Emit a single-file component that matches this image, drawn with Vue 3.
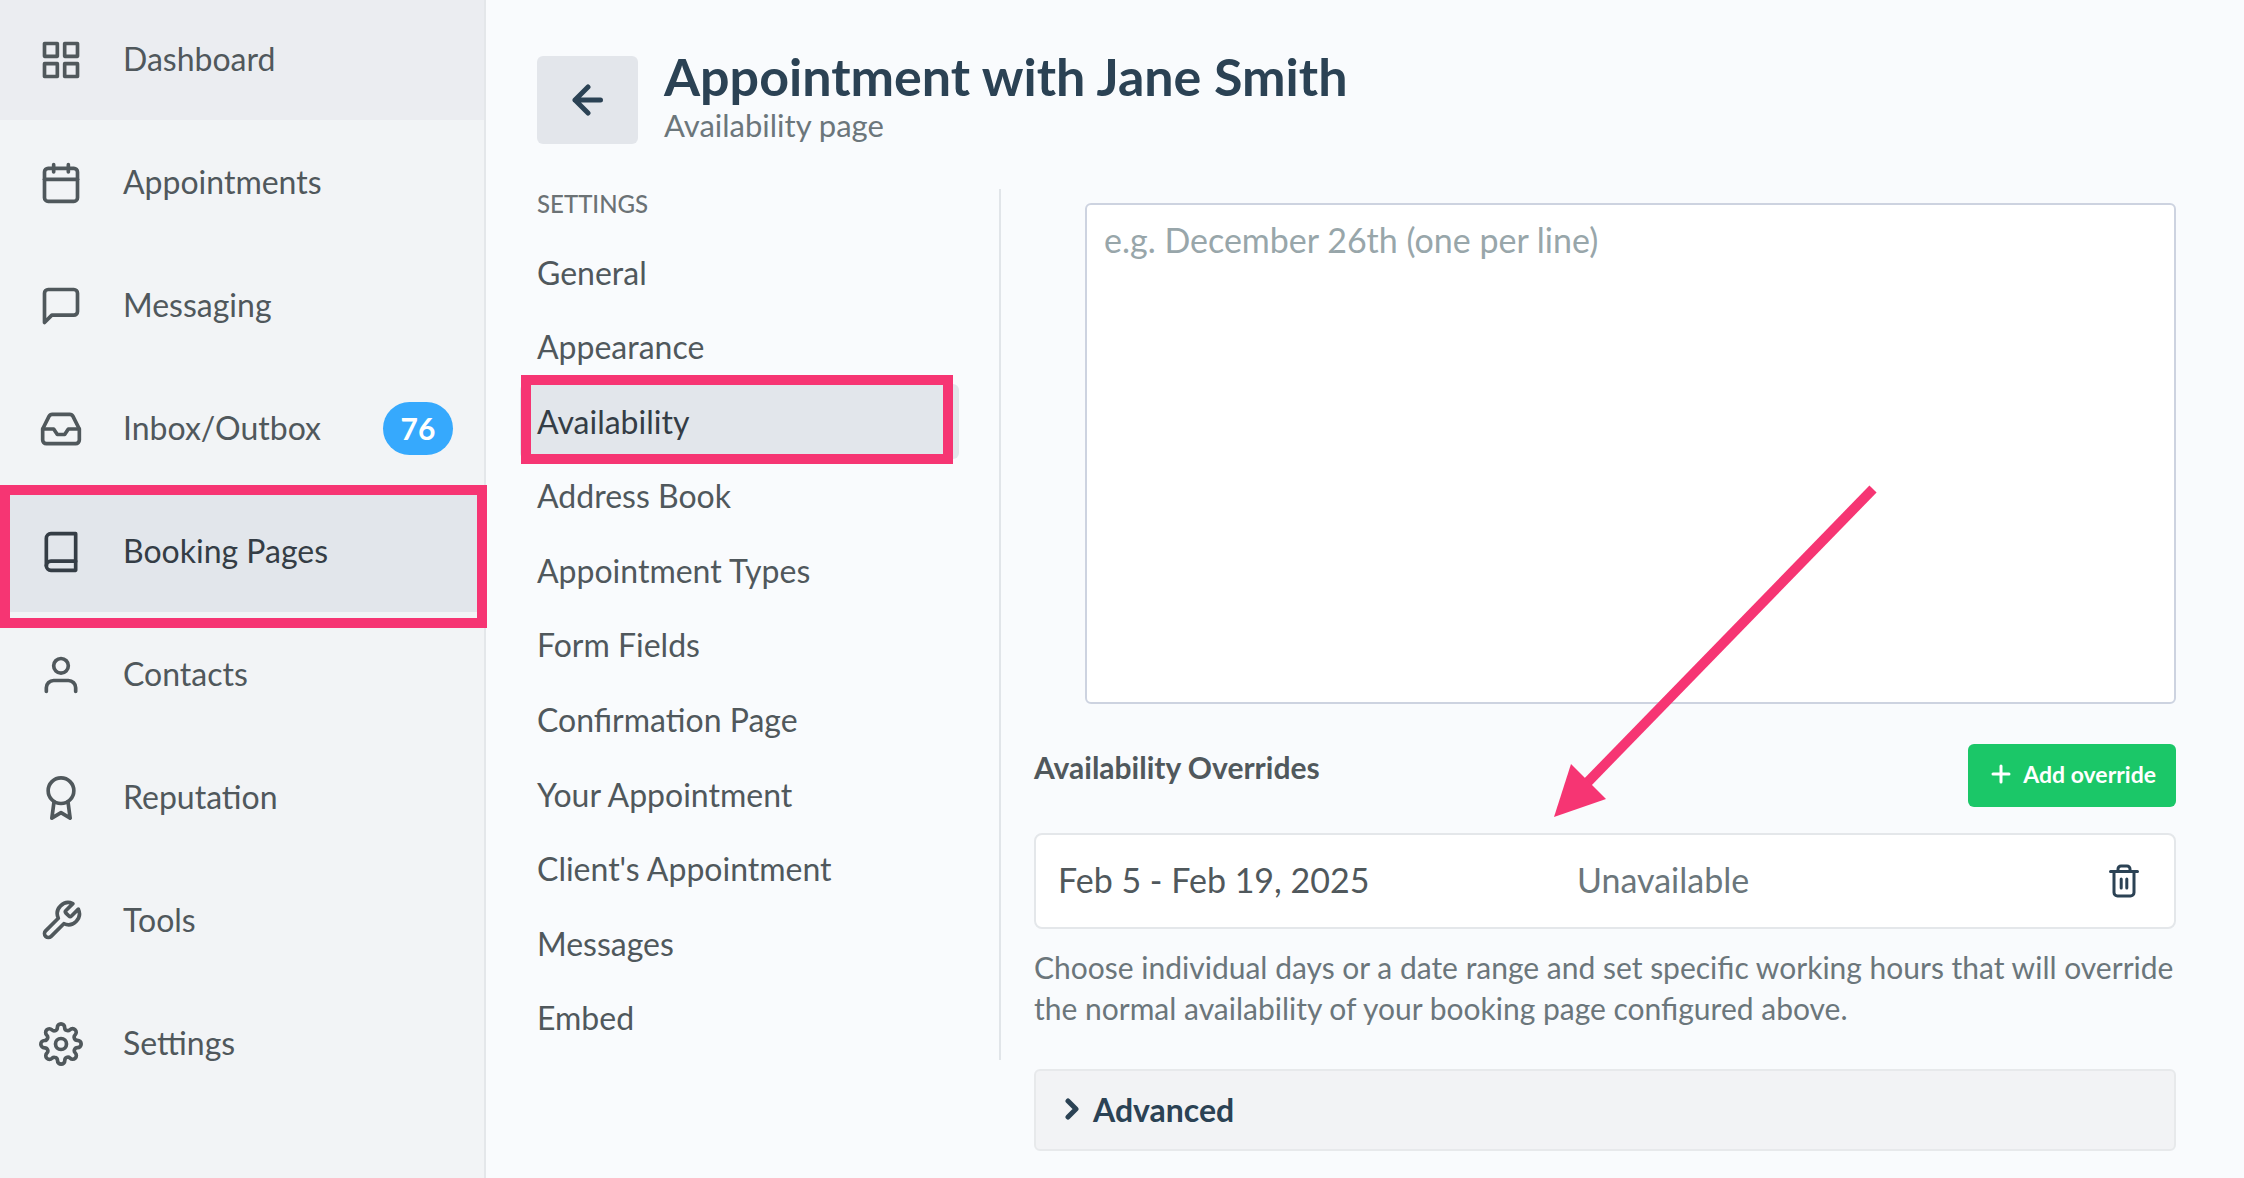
<script setup>
import { ref } from 'vue'

const navItems = [
  { label: 'Dashboard', state: 'hover', paths: ['M3 3h7v7H3z', 'M14 3h7v7h-7z', 'M14 14h7v7h-7z', 'M3 14h7v7H3z'] },
  { label: 'Appointments', paths: ['M5 4h14a2 2 0 0 1 2 2v14a2 2 0 0 1-2 2H5a2 2 0 0 1-2-2V6a2 2 0 0 1 2-2z', 'M16 2v4', 'M8 2v4', 'M3 10h18'] },
  { label: 'Messaging', paths: ['M21 15a2 2 0 0 1-2 2H7l-4 4V5a2 2 0 0 1 2-2h14a2 2 0 0 1 2 2z'] },
  { label: 'Inbox/Outbox', badge: 76, paths: ['M22 12h-6l-2 3h-4l-2-3H2', 'M5.45 5.11 2 12v6a2 2 0 0 0 2 2h16a2 2 0 0 0 2-2v-6l-3.45-6.89A2 2 0 0 0 16.76 4H7.24a2 2 0 0 0-1.79 1.11z'] },
  { label: 'Booking Pages', state: 'active', paths: ['M4 19.5A2.5 2.5 0 0 1 6.5 17H20', 'M6.5 2H20v20H6.5A2.5 2.5 0 0 1 4 19.5v-15A2.5 2.5 0 0 1 6.5 2z'] },
  { label: 'Contacts', paths: ['M20 21v-2a4 4 0 0 0-4-4H8a4 4 0 0 0-4 4v2', 'M12 3a4 4 0 1 1 0 8 4 4 0 0 1 0-8z'] },
  { label: 'Reputation', paths: ['M12 1a7 7 0 1 1 0 14 7 7 0 0 1 0-14z', 'M8.21 13.89 7 23l5-3 5 3-1.21-9.12'] },
  { label: 'Tools', paths: ['M14.7 6.3a1 1 0 0 0 0 1.4l1.6 1.6a1 1 0 0 0 1.4 0l3.77-3.77a6 6 0 0 1-7.94 7.94l-6.91 6.91a2.12 2.12 0 0 1-3-3l6.91-6.91a6 6 0 0 1 7.94-7.94l-3.76 3.76z'] },
  { label: 'Settings', paths: ['M12 9a3 3 0 1 1 0 6 3 3 0 0 1 0-6z', 'M19.4 15a1.65 1.65 0 0 0 .33 1.82l.06.06a2 2 0 0 1 0 2.83 2 2 0 0 1-2.83 0l-.06-.06a1.65 1.65 0 0 0-1.82-.33 1.65 1.65 0 0 0-1 1.51V21a2 2 0 0 1-2 2 2 2 0 0 1-2-2v-.09A1.65 1.65 0 0 0 9 19.4a1.65 1.65 0 0 0-1.82.33l-.06.06a2 2 0 0 1-2.83 0 2 2 0 0 1 0-2.83l.06-.06a1.65 1.65 0 0 0 .33-1.82 1.65 1.65 0 0 0-1.51-1H3a2 2 0 0 1-2-2 2 2 0 0 1 2-2h.09A1.65 1.65 0 0 0 4.6 9a1.65 1.65 0 0 0-.33-1.82l-.06-.06a2 2 0 0 1 0-2.83 2 2 0 0 1 2.83 0l.06.06a1.65 1.65 0 0 0 1.82.33H9a1.65 1.65 0 0 0 1-1.51V3a2 2 0 0 1 2-2 2 2 0 0 1 2 2v.09a1.65 1.65 0 0 0 1 1.51 1.65 1.65 0 0 0 1.82-.33l.06-.06a2 2 0 0 1 2.83 0 2 2 0 0 1 0 2.83l-.06.06a1.65 1.65 0 0 0-.33 1.82V9a1.65 1.65 0 0 0 1.51 1H21a2 2 0 0 1 2 2 2 2 0 0 1-2 2h-.09a1.65 1.65 0 0 0-1.51 1z'] },
]

const settings = [
  'General', 'Appearance', 'Availability', 'Address Book', 'Appointment Types', 'Form Fields',
  'Confirmation Page', 'Your Appointment', "Client's Appointment", 'Messages', 'Embed',
]

const holidays = ref('')
const overrides = [{ dates: 'Feb 5 - Feb 19, 2025', status: 'Unavailable' }]
</script>

<template>
  <div class="page">
    <nav class="sidebar" aria-label="Main">
      <a v-for="item in navItems" :key="item.label" href="#" class="nav-item" :class="item.state">
        <svg class="nav-icon" viewBox="0 0 24 24" aria-hidden="true">
          <path v-for="d in item.paths" :key="d" :d="d" />
        </svg>
        <span class="nav-label">{{ item.label }}</span>
        <span v-if="item.badge" class="badge">{{ item.badge }}</span>
        <span v-if="item.state === 'active'" class="marker nav-marker"></span>
      </a>
    </nav>

    <main class="main">
      <header class="header">
        <button class="back" type="button" aria-label="Back">
          <svg viewBox="0 0 32 32" aria-hidden="true"><path d="M28.500 16H3M16 3 3 16l13 13" /></svg>
        </button>
        <div>
          <h1>Appointment with Jane Smith</h1>
          <p class="subtitle">Availability page</p>
        </div>
      </header>

      <div class="body">
        <nav class="menu" aria-labelledby="menu-title">
          <h2 id="menu-title" class="menu-title">SETTINGS</h2>
          <ul>
            <li v-for="name in settings" :key="name">
              <a href="#" :class="{ current: name === 'Availability' }">{{ name }}
                <span v-if="name === 'Availability'" class="marker menu-marker"></span>
              </a>
            </li>
          </ul>
        </nav>

        <section class="content">
          <textarea v-model="holidays" aria-label="Holidays" placeholder="e.g. December 26th (one per line)"></textarea>

          <div class="overrides-head">
            <h3>Availability Overrides</h3>
            <button class="add" type="button">
              <svg viewBox="0 0 20 20" aria-hidden="true"><path d="M10 2v16M2 10h16" /></svg>
              Add override
            </button>
          </div>

          <div v-for="o in overrides" :key="o.dates" class="override">
            <span class="dates">{{ o.dates }}</span>
            <span class="status">{{ o.status }}</span>
            <button class="trash" type="button" aria-label="Delete override">
              <svg viewBox="0 0 30 34" aria-hidden="true">
                <path d="M1.500 7.500h27M5 7.500V28.500a3.500 3.500 0 0 0 3.500 3.500h13a3.500 3.500 0 0 0 3.500-3.500V7.500M9 7.500V5a3 3 0 0 1 3-3h6a3 3 0 0 1 3 3v2.500M12.200 15v9M17.800 15v9" />
              </svg>
            </button>
          </div>

          <p class="help">Choose individual days or a date range and set specific working hours that will override the normal availability of your booking page configured above.</p>

          <button class="advanced" type="button" aria-expanded="false">
            <svg viewBox="0 0 14 22" aria-hidden="true"><path d="m3 3 8 8-8 8" /></svg>
            Advanced
          </button>

          <svg class="pointer" viewBox="0 0 324 334" aria-hidden="true">
            <path d="M319 4 28 303" stroke="#f63573" stroke-width="10" />
            <path d="M0 332 17 279 52 314z" fill="#f63573" />
          </svg>
        </section>
      </div>
    </main>
  </div>
</template>

<style>
body {
  margin: 0;
  background: #f9fbfd;
}
</style>

<style scoped>
* {
  box-sizing: border-box;
}

.page {
  display: flex;
  min-height: 100vh;
  font-family: Lato, sans-serif;
  font-size: 32px;
  color: #50585c;
}

a {
  color: inherit;
  text-decoration: none;
}

button {
  font: inherit;
  border: 0;
  padding: 0;
  cursor: pointer;
}

svg {
  flex: none;
  fill: none;
  stroke-linecap: round;
  stroke-linejoin: round;
}

h1, h2, h3, p, ul {
  margin: 0;
  padding: 0;
}

.marker {
  position: absolute;
  border: 10px solid #f63573;
}

.sidebar {
  flex: none;
  display: flex;
  flex-direction: column;
  gap: 3px;
  width: 486px;
  background: #f2f4f6;
  border-right: 2px solid #e4e7ea;
}

.nav-item {
  position: relative;
  display: flex;
  align-items: center;
  gap: 40px;
  height: 120px;
  padding: 0 31px 1px 39px;
}

.nav-item.hover {
  background: #ebedf1;
}

.nav-item.active {
  background: #e2e6eb;
  color: #343d45;
}

.nav-icon {
  width: 44px;
  height: 44px;
  stroke: currentColor;
  stroke-width: 2;
}

.nav-label {
  padding-bottom: 3px;
}

.badge {
  margin-left: auto;
  width: 70px;
  border-radius: 27px;
  background: #36a9fd;
  color: #fff;
  font-size: 30px;
  font-weight: 700;
  line-height: 53px;
  text-align: center;
}

.nav-marker {
  top: -7px;
  right: -3px;
  bottom: -16px;
  left: 0;
}

.main {
  flex: 1;
  min-width: 0;
  padding: 48px 68px 27px 51px;
}

.header {
  display: flex;
  gap: 26px;
  margin-bottom: 43px;
}

.back {
  display: grid;
  place-items: center;
  width: 101px;
  height: 88px;
  margin-top: 8px;
  border-radius: 6px;
  background: #e3e6eb;
}

.back svg {
  width: 32px;
  height: 32px;
  stroke: #2b4254;
  stroke-width: 5;
}

h1 {
  color: #2b4254;
  font-size: 52px;
  font-weight: 700;
  line-height: 56px;
}

.subtitle {
  color: #6b767b;
  font-size: 31px;
  line-height: 42px;
}

.body {
  display: flex;
  align-items: flex-start;
  gap: 33px;
}

.menu {
  flex: none;
  display: flex;
  flex-direction: column;
  width: 464px;
  min-height: 871px;
  padding-bottom: 5px;
  border-right: 2px solid #e1e5e9;
}

.menu-title {
  color: #6b7275;
  font-size: 24px;
  font-weight: 500;
  line-height: 30px;
  margin-bottom: 16px;
}

.menu ul {
  flex: 1;
  display: grid;
  grid-auto-rows: 1fr;
  margin: 0 40px 0 -17px;
  list-style: none;
}

.menu li {
  display: grid;
}

.menu a {
  position: relative;
  display: flex;
  align-items: center;
  padding-left: 17px;
  border-radius: 6px;
}

.menu a.current {
  background: #e2e6eb;
  color: #343d45;
}

.menu-marker {
  top: -9px;
  right: 6px;
  bottom: -5px;
  left: 1px;
}

.content {
  position: relative;
  flex: 1;
  min-width: 0;
  display: flex;
  flex-direction: column;
  padding-top: 14px;
}

textarea {
  height: 501px;
  margin-left: 51px;
  padding: 11px 17px;
  border: 2px solid #cdd3e0;
  border-radius: 6px;
  background: #fff;
  color: #50585c;
  font: inherit;
  font-size: 34px;
  line-height: 48px;
  resize: none;
}

textarea::placeholder {
  color: #98a6aa;
  opacity: 1;
}

.overrides-head {
  display: flex;
  justify-content: space-between;
  margin-top: 40px;
}

h3 {
  font-size: 30px;
  font-weight: 700;
  line-height: 46px;
}

.add {
  display: flex;
  align-items: center;
  gap: 12px;
  height: 63px;
  padding: 0 20px 3px 23px;
  border-radius: 6px;
  background: #1bc768;
  color: #fff;
  font-size: 23px;
  font-weight: 700;
}

.add svg {
  width: 20px;
  height: 20px;
  stroke: currentColor;
  stroke-width: 3;
}

.override {
  display: grid;
  grid-template-columns: 519px 1fr auto;
  align-items: center;
  height: 96px;
  margin-top: 26px;
  padding: 0 35px 0 22px;
  border: 2px solid #e4e7ea;
  border-radius: 8px;
  background: #fff;
  font-size: 34px;
}

.dates,
.status {
  padding-bottom: 4px;
}

.status {
  color: #6b767b;
}

.trash {
  display: grid;
  background: none;
}

.trash svg {
  width: 30px;
  height: 34px;
  stroke: #2b4254;
  stroke-width: 3;
}

.help {
  margin-top: 18px;
  color: #6b767b;
  font-size: 30px;
  line-height: 41px;
}

.advanced {
  display: flex;
  align-items: center;
  gap: 14px;
  height: 82px;
  margin-top: 40px;
  padding: 0 29px 2px;
  border: 2px solid #e7e9eb;
  border-radius: 6px;
  background: #f2f3f5;
  color: #2b4254;
  font-size: 32px;
  font-weight: 700;
}

.advanced svg {
  width: 14px;
  height: 22px;
  stroke: currentColor;
  stroke-width: 5;
}

.pointer {
  position: absolute;
  top: 296px;
  right: 298px;
  width: 324px;
  height: 334px;
  stroke-linecap: butt;
  pointer-events: none;
}
</style>
